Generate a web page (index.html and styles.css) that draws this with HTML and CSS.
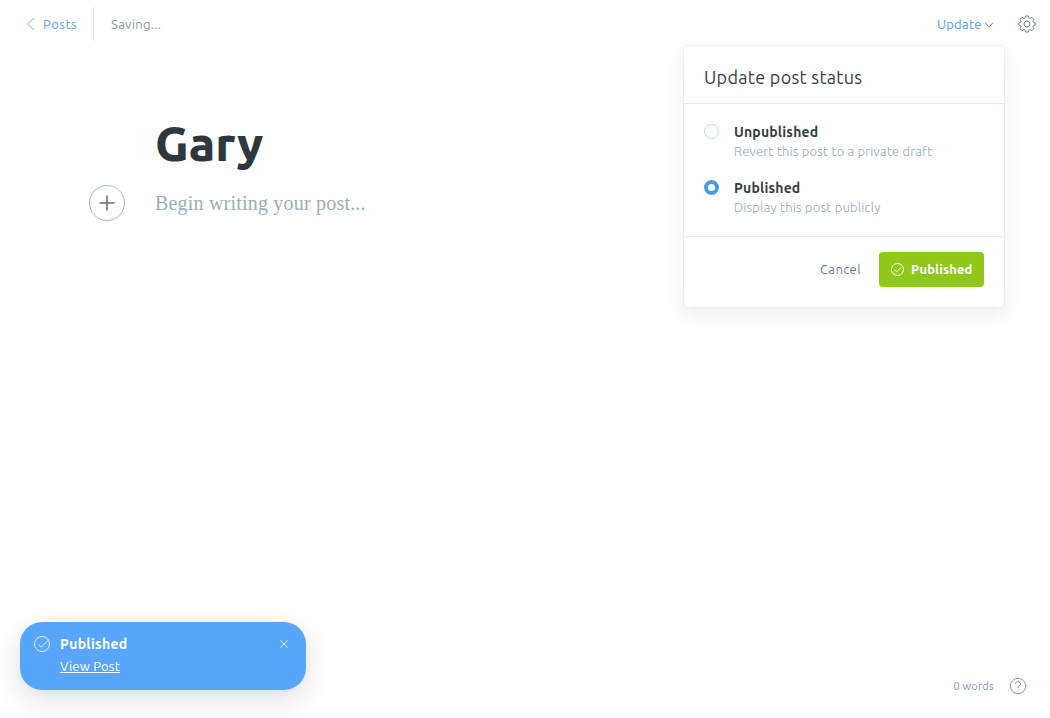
FILE: index.html
```
<!DOCTYPE html>
<html lang="en">
<head>
<meta charset="utf-8">
<title>Post editor</title>
<link rel="stylesheet" href="styles.css">
</head>
<body>
<div class="editor">
  <header class="topbar">
    <a class="back"><svg class="back-icon" width="9" height="14" viewBox="0 0 9 14"><path d="M8.200 1 1.500 7l6.700 6"/></svg><span>Posts</span></a>
    <span class="status">Saving...</span>
    <div class="actions">
      <a class="update"><span>Update</span><svg class="chevron" width="10" height="7" viewBox="0 0 10 7"><path d="M1 1.700 5 5.800l4-4.100"/></svg></a>
      <svg class="gear" width="18" height="18" viewBox="0 0 18 18"><circle cx="9" cy="9" r="3"/><path d="M6.900 3.100 7.500 1h3l.6 2.100 1 .4L14 2.400l2 2.100-1 1.900.4 1 1.900.6v2l-1.900.6-.4 1 1 1.900-2 2.100-1.900-1.100-1 .4-.6 2.100h-3l-.6-2.100-1-.4L4 15.600l-2-2.100 1-1.900-.4-1L.7 10V8l1.900-.6.4-1-1-1.900 2-2.100 1.900 1.100z"/></svg>
    </div>
  </header>
  <main class="content">
    <h1 class="post-title">Gary</h1>
    <div class="body-row">
      <button class="add" aria-label="Add card"><svg width="16" height="16" viewBox="0 0 16 16"><path d="M8 .5v15M.5 8h15"/></svg></button>
      <p class="placeholder">Begin writing your post...</p>
    </div>
  </main>
  <footer class="footer">
    <span>0 words</span>
    <svg class="help" width="18" height="18" viewBox="0 0 18 18"><circle cx="9" cy="9" r="7.700"/><path d="M6.500 7.100C6.500 5.600 7.500 4.800 9 4.800s2.500.9 2.500 2.200c0 1.700-2.500 1.900-2.500 3.600v.8M9 12.800v1.100"/></svg>
  </footer>
</div>

<section class="popup">
  <h2 class="popup-title">Update post status</h2>
  <div class="options">
    <div class="option"><span class="radio"></span><div><div class="label">Unpublished</div><div class="desc">Revert this post to a private draft</div></div></div>
    <div class="option"><span class="radio checked"></span><div><div class="label">Published</div><div class="desc">Display this post publicly</div></div></div>
  </div>
  <div class="popup-footer">
    <a class="cancel">Cancel</a>
    <button class="publish"><svg width="13" height="13" viewBox="0 0 13 13"><circle cx="6.500" cy="6.500" r="6"/><path d="m3.300 6.700 2.300 2.200 4.500-4.500"/></svg><span>Published</span></button>
  </div>
</section>

<aside class="toast">
  <svg class="toast-check" width="16" height="16" viewBox="0 0 16 16"><circle cx="8" cy="8" r="7.500"/><path d="m4 8.300 3 2.900 7.600-7.300"/></svg>
  <div class="toast-text"><strong>Published</strong><a class="view">View Post</a></div>
  <svg class="close" width="8" height="8" viewBox="0 0 8 8"><path d="m.3.3 7.400 7.400M7.700.3.300 7.700"/></svg>
</aside>
</body>
</html>
```
FILE: styles.css
```
* { box-sizing: border-box; }
body { margin: 0; height: 718px; overflow: hidden; position: relative; background: #fff; color: #343f44; font-family: Ubuntu, "Noto Sans", sans-serif; font-size: 13px; letter-spacing: .22px; }
svg { display: block; flex: none; fill: none; stroke: currentColor; stroke-width: 1; }
h1, h2, p { margin: 0; }
span { white-space: nowrap; }
button { font: inherit; letter-spacing: inherit; margin: 0; padding: 0; }

.editor { height: 718px; display: flex; flex-direction: column; }
.topbar { display: flex; align-items: center; height: 48px; flex: none; padding: 0 14px 0 26px; line-height: 20px; }
.back { display: flex; align-items: center; gap: 8px; height: 36px; width: 68px; border-right: 1px solid #dfe9f1; color: #51a1f7; }
.back span { letter-spacing: .5px; }
.back-icon { opacity: .8; }
.status { margin-left: 17px; color: #8798a3; letter-spacing: .3px; }
.actions { display: flex; align-items: center; gap: 24px; margin-left: auto; }
.update { display: flex; align-items: center; justify-content: space-between; width: 57px; color: #51a1f7; letter-spacing: .3px; }
.chevron { color: #6a8190; }
.gear { color: #708590; }

.content { flex: 1; padding: 68px 89px 0; }
.post-title { height: 56px; margin-left: 66px; font-size: 48px; line-height: 54px; font-weight: 800; letter-spacing: 0; color: #2e373d; }
.body-row { display: flex; align-items: center; gap: 30px; margin-top: 13px; }
.add { width: 36px; height: 36px; display: grid; place-items: center; border: 1px solid #a9b8c1; border-radius: 50%; background: #fff; color: #5f7078; }
.add svg { stroke-width: 1.500; }
.placeholder { font-family: "Liberation Serif", serif; font-size: 20px; line-height: 32px; letter-spacing: .2px; color: #9baeb9; }
.footer { display: flex; justify-content: flex-end; align-items: center; gap: 15px; padding: 0 23px 23px; font-size: 11px; line-height: 18px; color: #829aa8; }

.popup { position: absolute; left: 684px; top: 46px; width: 320px; height: 261px; background: #fff; border-radius: 4px; box-shadow: 0 0 0 1px rgba(99,114,130,.07), 0 8px 20px rgba(27,39,51,.08); }
.popup-title { height: 58px; padding: 0 20px; line-height: 62px; font-size: 18px; font-weight: 400; letter-spacing: .3px; border-bottom: 1px solid #dfe9f1; }
.options { height: 133px; padding: 18px 20px; border-bottom: 1px solid #dfe9f1; }
.option { display: flex; gap: 15px; height: 56px; }
.radio { flex: none; width: 15px; height: 15px; margin-top: 2px; border: 1px solid #c1d9ee; border-radius: 50%; }
.radio.checked { border: 4px solid #4b9aea; }
.label { font-size: 14px; line-height: 20px; font-weight: 600; letter-spacing: .18px; white-space: nowrap; }
.desc { line-height: 19px; font-weight: 300; color: #94a8b2; white-space: nowrap; }
.popup-footer { display: flex; justify-content: flex-end; align-items: center; gap: 18px; padding: 15px 20px; }
.cancel { margin-top: -2px; color: #6b7c87; letter-spacing: .4px; }
.publish { width: 105px; height: 35px; display: flex; align-items: center; gap: 7px; padding: 0 0 1px 12px; border: 0; border-radius: 4px; background: #90c81a; color: #fff; font-weight: 600; letter-spacing: .15px; }

.toast { position: absolute; left: 20px; top: 622px; width: 286px; height: 68px; display: flex; align-items: flex-start; padding: 12px 18px 0 14px; border-radius: 22px; background: #58a6fc; color: #fff; box-shadow: 0 10px 28px rgba(0,0,0,.12), 0 2px 6px rgba(0,0,0,.03); }
.toast-check { margin-top: 2px; opacity: .8; }
.toast-text { display: flex; flex-direction: column; align-items: flex-start; margin-left: 10px; line-height: 20px; }
.toast-text strong { font-size: 14px; letter-spacing: .3px; }
.view { margin-top: 2px; text-decoration: underline; }
.close { margin: 6px 0 0 auto; opacity: .8; }
```
